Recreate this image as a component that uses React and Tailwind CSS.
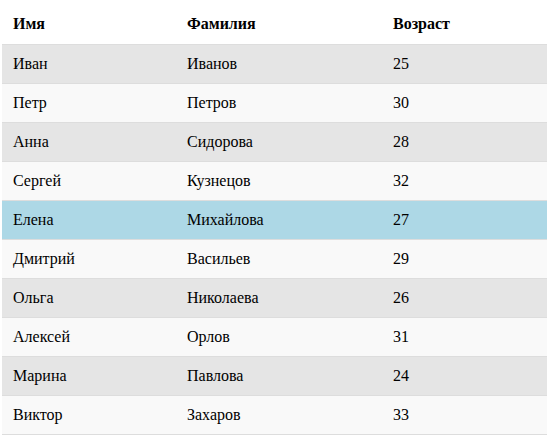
import React from "react";

const people = [
  { first: "Иван", last: "Иванов", age: 25 },
  { first: "Петр", last: "Петров", age: 30 },
  { first: "Анна", last: "Сидорова", age: 28 },
  { first: "Сергей", last: "Кузнецов", age: 32 },
  { first: "Елена", last: "Михайлова", age: 27, active: true },
  { first: "Дмитрий", last: "Васильев", age: 29 },
  { first: "Ольга", last: "Николаева", age: 26 },
  { first: "Алексей", last: "Орлов", age: 31 },
  { first: "Марина", last: "Павлова", age: 24 },
  { first: "Виктор", last: "Захаров", age: 33 },
];

export default function App() {
  return (
    <div className="bg-white px-[2px] pt-[5px] text-[16px] text-black">
      <table className="w-[545px] border-collapse text-left [font-family:'Liberation_Serif',serif]">
        <thead>
          <tr className="h-[39px] border-b border-[#dddddd]">
            <th className="w-[174px] px-[11px] font-bold">Имя</th>
            <th className="w-[206px] px-[11px] font-bold">Фамилия</th>
            <th className="px-[11px] font-bold">Возраст</th>
          </tr>
        </thead>
        <tbody>
          {people.map((p, i) => (
            <tr
              key={p.first}
              className={
                "h-[39px] border-b border-[#dddddd] " +
                (p.active ? "bg-[#add8e6]" : i % 2 === 0 ? "bg-[#e5e5e5]" : "bg-[#f9f9f9]")
              }
            >
              <td className="px-[11px]">{p.first}</td>
              <td className="px-[11px]">{p.last}</td>
              <td className="px-[11px]">{p.age}</td>
            </tr>
          ))}
        </tbody>
      </table>
    </div>
  );
}
